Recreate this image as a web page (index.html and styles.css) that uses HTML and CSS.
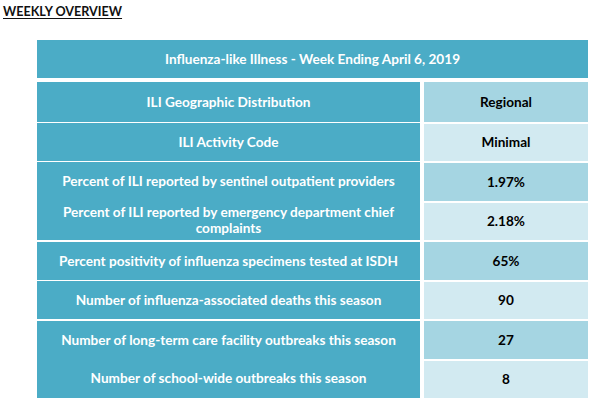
FILE: index.html
```html
<!DOCTYPE html>
<html>
<head>
<meta charset="utf-8">
<link rel="stylesheet" href="styles.css">
</head>
<body>
<div class="page">
  <h1 class="title">WEEKLY OVERVIEW</h1>
  <div class="table">
    <div class="head">Influenza-like Illness - Week Ending April 6, 2019</div>
    <div class="grid">
      <div class="lab">ILI Geographic Distribution</div>
      <div class="val dark">Regional</div>

      <div class="lab sep1">ILI Activity Code</div>
      <div class="val light sep">Minimal</div>

      <div class="lab sep1">Percent of ILI reported by sentinel outpatient providers</div>
      <div class="val dark sep">1.97%</div>

      <div class="lab">Percent of ILI reported by emergency department chief complaints</div>
      <div class="val light sep">2.18%</div>

      <div class="lab sep2">Percent positivity of influenza specimens tested at ISDH</div>
      <div class="val dark sep">65%</div>

      <div class="lab sep1">Number of influenza-associated deaths this season</div>
      <div class="val light sep">90</div>

      <div class="lab sep2">Number of long-term care facility outbreaks this season</div>
      <div class="val dark sep">27</div>

      <div class="lab">Number of school-wide outbreaks this season</div>
      <div class="val light sep">8</div>
    </div>
  </div>
</div>
</body>
</html>
```
FILE: styles.css
```css
html, body {
  margin: 0;
  padding: 0;
  background: #ffffff;
}
body {
  font-family: Lato, "Open Sans", sans-serif;
  font-weight: 700;
  font-size: 13.6px;
}
.page {
  padding: 4px 0 0 3px;
}
.title {
  margin: 0;
  font-size: 12.6px;
  font-weight: 700;
  color: #111;
  text-decoration: underline;
  text-underline-offset: 2px;
  line-height: 16px;
}
.table {
  margin: 20px 0 0 34px;
  width: 551px;
}
.head {
  background: #4bacc6;
  color: #fff;
  height: 38px;
  display: flex;
  align-items: center;
  justify-content: center;
  margin-bottom: 4px;
}
.grid {
  display: grid;
  grid-template-columns: 383px 164px;
  grid-auto-rows: 39.5px;
  column-gap: 4px;
}
.lab, .val {
  display: flex;
  align-items: center;
  justify-content: center;
  text-align: center;
  line-height: 16px;
  box-sizing: border-box;
  padding: 0 6px;
}
.lab {
  background: #4bacc6;
  color: #fff;
}
.val {
  color: #000;
}
.dark { background: #a5d5e2; }
.light { background: #d2eaf1; }
.sep { border-top: 2px solid #fff; }
.sep1 { border-top: 1px solid #fff; }
.sep2 { border-top: 2px solid #fff; }
```
